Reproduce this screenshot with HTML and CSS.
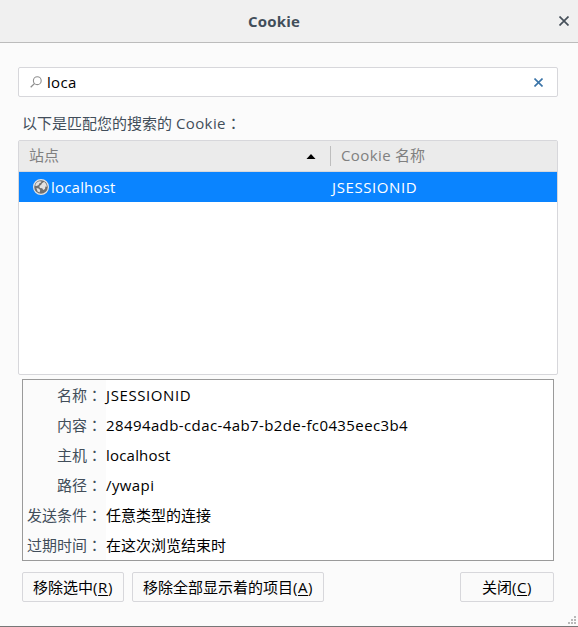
FILE: index.html
```html
<!DOCTYPE html>
<html lang="zh-CN">

<head>
  <meta charset="UTF-8">
  <meta name="viewport" content="width=device-width, initial-scale=1.0">
  <title>Cookie</title>
  <link rel="stylesheet" href="styles.css">
</head>

<body>
  <div class="dialog">
    <div class="titlebar">
      <div class="title">Cookie</div>
      <svg class="close" width="10" height="10" viewBox="0 0 10 10">
        <path d="M.5.5l9 9M9.5.5l-9 9" fill="none" stroke="#46505a" stroke-width="1.7" />
      </svg>
    </div>
    <div class="content">
      <div class="search">
        <svg class="search-icon" width="12" height="12" viewBox="0 0 12 12">
          <circle cx="7.3" cy="4.7" r="3.9" fill="none" stroke="#8f8f8f" stroke-width="1.1" />
          <path d="M4.4 7.6L.7 11.3" stroke="#8f8f8f" stroke-width="1.3" />
        </svg>
        <div class="search-text">loca</div>
        <svg class="clear" width="9" height="9" viewBox="0 0 9 9">
          <path d="M.5.5l8 8M8.5.5l-8 8" fill="none" stroke="#3a74a8" stroke-width="1.6" />
        </svg>
      </div>
      <div class="hint">以下是匹配您的搜索的 <span class="word">Cookie</span><span class="colon" lang="zh-TW">：</span></div>
      <div class="tree">
        <div class="tree-head">
          <div class="col-site">
            <span>站点</span>
            <svg width="10" height="5" viewBox="0 0 10 5">
              <path d="M5 0l4.5 5h-9z" fill="#000" />
            </svg>
          </div>
          <div class="col-name"><span class="word">Cookie</span> 名称</div>
        </div>
        <div class="tree-row">
          <div class="cell-site">
            <svg width="16" height="16" viewBox="0 0 16 16">
              <circle cx="8" cy="8" r="7.4" fill="#707070" stroke="#e4e4e4" stroke-width="1.2" />
              <path d="M2 6.6L3.4 3.8 6 2.2l2.6.2-.9 1.4-1.5.6-.5 1.5-2 1.2zM9 4.2l2.2-1.4 2 2.2.7 2.8-1.5-.3-.4 2.4-1.8 1.2-1-1.8-2.4-.4L6.4 7l1.8-1.2zM3.4 9l2.2.4 1.6 1.6-.6 2.6-2-1.2z" fill="#e2e2e2" />
            </svg>
            <span class="host">localhost</span>
          </div>
          <div class="cell-name caps">JSESSIONID</div>
        </div>
      </div>
      <div class="info">
        <div class="info-label">名称<span class="colon" lang="zh-TW">：</span></div>
        <div class="info-value caps">JSESSIONID</div>
        <div class="info-label">内容<span class="colon" lang="zh-TW">：</span></div>
        <div class="info-value word">28494adb-cdac-4ab7-b2de-fc0435eec3b4</div>
        <div class="info-label">主机<span class="colon" lang="zh-TW">：</span></div>
        <div class="info-value host">localhost</div>
        <div class="info-label">路径<span class="colon" lang="zh-TW">：</span></div>
        <div class="info-value word">/ywapi</div>
        <div class="info-label">发送条件<span class="colon" lang="zh-TW">：</span></div>
        <div class="info-value">任意类型的连接</div>
        <div class="info-label">过期时间<span class="colon" lang="zh-TW">：</span></div>
        <div class="info-value">在这次浏览结束时</div>
      </div>
      <div class="buttons">
        <div class="button remove">移除选中<span class="key">(<u>R</u>)</span></div>
        <div class="button remove-all">移除全部显示着的项目<span class="key">(<u>A</u>)</span></div>
        <div class="button done">关闭<span class="key">(<u>C</u>)</span></div>
      </div>
    </div>
    <svg class="resizer" width="8" height="8" viewBox="0 0 8 8">
      <path d="M6 0h2v2H6zM3 3h2v2H3zM6 3h2v2H6zM0 6h2v2H0zM3 6h2v2H3zM6 6h2v2H6z" fill="#b9b9b9" />
    </svg>
  </div>
</body>

</html>
```

FILE: styles.css
```css
* {
  box-sizing: border-box;
}

body {
  margin: 0;
  font-family: "Open Sans", "Noto Sans CJK SC", sans-serif;
  font-size: 15px;
  color: #000;
}

svg {
  display: block;
  flex: none;
}

.dialog {
  position: relative;
  width: 578px;
  height: 627px;
  background: #fbfbfb;
  border-bottom: 1px solid #777;
  overflow: hidden;
}

.titlebar {
  display: flex;
  align-items: center;
  height: 43px;
  padding: 0 9px 0 0;
  background: #f0f0f0;
  border-bottom: 1px solid #bcbcbc;
}

.title {
  flex: 1;
  padding-right: 11px;
  text-align: center;
  font-weight: bold;
  letter-spacing: 0.2px;
  color: #424e5a;
}

.content {
  padding: 24px 20px 0 18px;
}

.search {
  display: flex;
  align-items: center;
  height: 30px;
  padding: 0 14px 0 11px;
  background: #fff;
  border: 1px solid #d7d7db;
  border-radius: 2px;
}

.search-text {
  flex: 1;
  margin-left: 5px;
  letter-spacing: 0.3px;
}

.hint {
  height: 43px;
  padding: 5px 0 0 4px;
  line-height: 41px;
  color: #424e5a;
  white-space: nowrap;
}

.colon {
  font-family: "Noto Sans CJK TC", sans-serif;
}

.word {
  letter-spacing: 0.4px;
}

.host {
  letter-spacing: 0.2px;
}

.caps {
  letter-spacing: 0.6px;
}

.tree {
  height: 235px;
  background: #fff;
  border: 1px solid #d7d7db;
  border-radius: 2px;
}

.tree-head {
  display: flex;
  align-items: center;
  height: 31px;
  background: #ebebeb;
  border-bottom: 1px solid #d7d7db;
  line-height: 20px;
  color: #808080;
}

.col-site {
  display: flex;
  align-items: center;
  justify-content: space-between;
  width: 312px;
  height: 20px;
  padding: 0 14px 0 10px;
  border-right: 1px solid #bebebe;
}

.col-name {
  padding: 0 0 2px 10px;
}

.col-site span {
  padding-bottom: 2px;
}

.tree-row {
  display: flex;
  align-items: center;
  height: 30px;
  background: #0a84ff;
  color: #fff;
}

.cell-site {
  display: flex;
  align-items: center;
  gap: 2px;
  width: 313px;
  padding-left: 14px;
}

.info {
  display: grid;
  grid-template-columns: 83px 1fr;
  grid-auto-rows: 30px;
  margin: 4px 4px 0;
  width: 532px;
  background: #fff;
  border: 1px solid #9a9a9a;
  line-height: 30px;
}

.info-label {
  padding-right: 4px;
  background: #fbfbfb;
  color: #424e5a;
  text-align: right;
  white-space: nowrap;
}

.buttons {
  display: flex;
  gap: 8px;
  width: 532px;
  margin: 11px 4px 0;
}

.button {
  height: 30px;
  background: #fafafa;
  border: 1px solid #d7d7db;
  border-radius: 2px;
  line-height: 28px;
  text-align: center;
  white-space: nowrap;
}

.button u {
  text-underline-offset: 2px;
}

.key {
  letter-spacing: 0.6px;
}

.remove {
  width: 102px;
}

.remove-all {
  width: 192px;
}

.done {
  width: 94px;
  margin-left: auto;
}

.resizer {
  position: absolute;
  right: 2px;
  bottom: 2px;
}
```
